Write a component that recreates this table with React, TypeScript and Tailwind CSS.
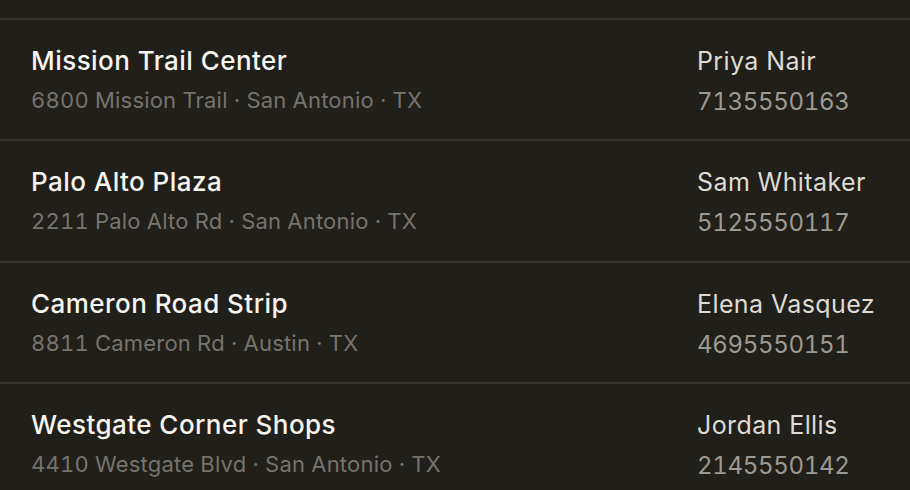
import React from "react";

const rows = [
  { name: "Mission Trail Center", addr: "6800 Mission Trail · San Antonio · TX", contact: "Priya Nair", phone: "7135550163" },
  { name: "Palo Alto Plaza", addr: "2211 Palo Alto Rd · San Antonio · TX", contact: "Sam Whitaker", phone: "5125550117" },
  { name: "Cameron Road Strip", addr: "8811 Cameron Rd · Austin · TX", contact: "Elena Vasquez", phone: "4695550151" },
  { name: "Westgate Corner Shops", addr: "4410 Westgate Blvd · San Antonio · TX", contact: "Jordan Ellis", phone: "2145550142" },
];

export default function App() {
  return (
    <div
      className="w-[910px] h-[490px] overflow-hidden bg-[#211f1a]"
      style={{ fontFamily: "Inter, 'Noto Sans', sans-serif" }}
    >
      <div className="h-[18px]" />
      {rows.map((r) => (
        <div
          key={r.name}
          className="h-[121.33px] border-t-2 border-[#35332e] flex items-start pl-[31px] pr-[31px] pt-[25px]"
        >
          <div className="flex-1 flex flex-col">
            <div className="text-[26px] leading-[32px] font-medium tracking-[0.45px] text-[#f7f5f0]">{r.name}</div>
            <div className="text-[22px] leading-[30px] mt-[8px] tabular-nums tracking-[0.2px] text-[#76736d]">{r.addr}</div>
          </div>
          <div className="w-[182px] flex flex-col">
            <div className="text-[25px] leading-[32px] tracking-[0.4px] text-[#dedbd4]">{r.contact}</div>
            <div className="text-[24px] leading-[30px] mt-[10px] tabular-nums tracking-[-0.3px] text-[#9c9991]">{r.phone}</div>
          </div>
        </div>
      ))}
    </div>
  );
}
